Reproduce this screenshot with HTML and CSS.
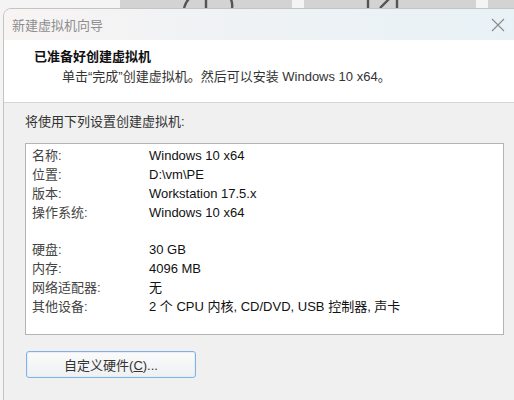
FILE: index.html
```html
<!DOCTYPE html>
<html lang="zh-CN">
<head>
    <meta charset="UTF-8">
    <title>新建虚拟机向导</title>
    <link rel="stylesheet" href="styles.css">
</head>
<body>
    <!-- Окно позади диалога -->
    <div class="backdrop">
        <div class="tile tile-1">
            <svg width="172" height="8" viewBox="0 0 172 8"><path d="M64 8 Q66 1 70 -2 M110 -2 Q113 2 112 8 M86 0 V8" fill="none" stroke="#555" stroke-width="2.4"/></svg>
        </div>
        <div class="tile tile-2">
            <svg width="172" height="8" viewBox="0 0 172 8"><path d="M64 0 V8 M76 8 L86 -2 M93 0 V8" fill="none" stroke="#555" stroke-width="2.4"/></svg>
        </div>
        <div class="tile tile-3"></div>
    </div>

    <div class="dialog">
        <div class="titlebar">
            <span class="title">新建虚拟机向导</span>
            <svg class="close" width="14" height="14" viewBox="0 0 14 14"><path d="M1 1 L13 13 M13 1 L1 13" stroke="#8a8a8a" stroke-width="1.1" fill="none"/></svg>
        </div>

        <div class="header">
            <div class="heading">已准备好创建虚拟机</div>
            <div class="subtitle">单击“完成”创建虚拟机。然后可以安装 Windows 10 x64。</div>
        </div>

        <div class="content">
            <div class="intro">将使用下列设置创建虚拟机:</div>

            <div class="summary">
                <div class="row"><span class="key">名称:</span><span class="val">Windows 10 x64</span></div>
                <div class="row"><span class="key">位置:</span><span class="val">D:\vm\PE</span></div>
                <div class="row"><span class="key">版本:</span><span class="val">Workstation 17.5.x</span></div>
                <div class="row"><span class="key">操作系统:</span><span class="val">Windows 10 x64</span></div>
                <div class="row"></div>
                <div class="row"><span class="key">硬盘:</span><span class="val">30 GB</span></div>
                <div class="row"><span class="key">内存:</span><span class="val">4096 MB</span></div>
                <div class="row"><span class="key">网络适配器:</span><span class="val">无</span></div>
                <div class="row"><span class="key">其他设备:</span><span class="val">2 个 CPU 内核, CD/DVD, USB 控制器, 声卡</span></div>
            </div>

            <button class="btn">自定义硬件(<u>C</u>)...</button>
        </div>
    </div>
</body>
</html>
```

FILE: styles.css
```css
/* Общие стили */
body {
    margin: 0;
    width: 514px;
    height: 400px;
    overflow: hidden;
    background-color: #f4f4f4;
    font-family: "Liberation Sans", "Noto Sans CJK SC", sans-serif;
    font-size: 13px;
    color: #1e1e1e;
}

/* Полоска окна позади */
.backdrop {
    display: flex;
    height: 8px;
    overflow: hidden;
    padding-left: 120px;
    gap: 12px;
}

.tile {
    width: 173px;
    height: 8px;
    background-color: #d3d3d3;
}

.tile-3 {
    width: 30px;
}

.tile svg {
    display: block;
}

/* Диалог */
.dialog {
    margin-left: 3px;
    width: 520px;
    height: 392px;
    border: 1px solid #c4c4c4;
    border-radius: 8px 8px 0 0;
    background-color: #f0f0f0;
    overflow: hidden;
}

.titlebar {
    display: flex;
    align-items: center;
    justify-content: space-between;
    height: 31px;
    padding: 0 19px 0 8px;
    background: linear-gradient(to right, #f8f4f4, #eef2f5 50%, #e8f2f6);
}

.title {
    color: #8e8e8e;
    font-size: 13px;
}

.close {
    display: block;
}

.header {
    box-sizing: border-box;
    height: 63px;
    padding: 8px 0 0 30px;
    background-color: #ffffff;
    border-bottom: 1px solid #d6d6d6;
}

.heading {
    font-weight: bold;
    line-height: 18px;
    color: #111;
}

.subtitle {
    line-height: 22px;
    padding-left: 28px;
    color: #333;
}

/* Основная часть */
.content {
    padding: 10px 0 0 21px;
}

.intro {
    line-height: 18px;
    color: #333;
}

.summary {
    box-sizing: border-box;
    margin-top: 12px;
    width: 479px;
    height: 192px;
    padding: 3px 0 0 6px;
    border: 1px solid #b4b4b4;
    background-color: #ffffff;
}

.row {
    display: flex;
    height: 18.9px;
    line-height: 18.9px;
}

.key {
    width: 117px;
    color: #444;
}

.val {
    color: #111;
}

/* Кнопка */
.btn {
    display: block;
    margin-top: 16px;
    margin-left: 1px;
    width: 170px;
    height: 27px;
    padding: 0;
    border: 1px solid #82b2e0;
    border-radius: 3px;
    background: linear-gradient(#fbfbfb, #eef0f2);
    font-family: "Liberation Sans", "Noto Sans CJK SC", sans-serif;
    font-size: 13px;
    color: #333;
    box-shadow: inset 0 0 0 1px #e4eef8;
}
```
